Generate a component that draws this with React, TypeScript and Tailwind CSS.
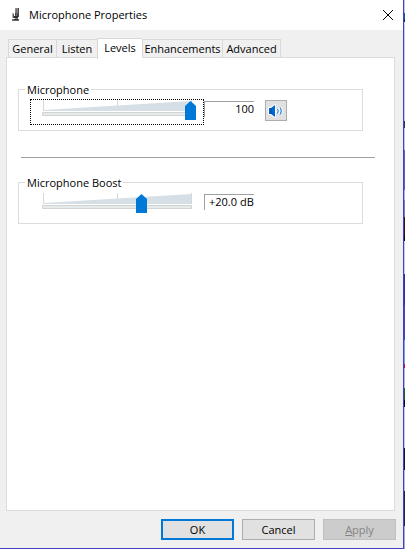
import { useState } from "react";

const tabs = [
    { name: "General", width: "w-12" },
    { name: "Listen", width: "w-[41px]" },
    { name: "Levels", width: "w-[45px]" },
    { name: "Enhancements", width: "w-20" },
    { name: "Advanced", width: "w-[59px]" },
];

const MicIcon = () => {
    return (
        <svg className="h-4 w-4" viewBox="0 0 16 16" shapeRendering="crispEdges">
            <path d="M7 1h4v9H7z" fill="#4a4a4a" />
            <path d="M7 1h3v5H7z" fill="#8b8b8b" />
            <path d="M8 2h1v7H8z" fill="#6a6a6a" />
            <path d="M4 6h2v5H4z" fill="#b5b5b5" />
            <path d="M5 7h1v4H5z" fill="#555" />
            <path d="M6 9h4v2H6z" fill="#2f2f2f" />
            <path d="M7 11h3v1H7z" fill="#777" />
            <path d="M4 12h7v2H4z" fill="#6c6c6c" />
            <path d="M6 12h4v1H6z" fill="#333" />
        </svg>
    );
};

const SpeakerIcon = () => {
    return (
        <svg className="h-4 w-4" viewBox="0 0 16 16">
            <path d="M1 5h2L7 2v12l-4-3H1z" fill="#0067d0" stroke="#fff" strokeWidth="2" strokeLinejoin="round" paintOrder="stroke" />
            <path d="M3 5v6" stroke="#0a4a9c" />
            <path d="M9.500 6q1.500 2 0 4.500M12 4.500q2.500 3.500 0 7" fill="none" stroke="#fff" strokeWidth="3" />
            <path d="M9.500 6q1.500 2 0 4.500M12 4.500q2.500 3.500 0 7" fill="none" stroke="#1f7fdc" strokeWidth="1.200" />
        </svg>
    );
};

const VolumeSlider = ({ label, max, value, onChange }: { label: string; max: number; value: number; onChange: (v: number) => void }) => {
    return (
        <div className="relative h-6 w-[158px]">
            <svg className="absolute left-1 top-0 h-6 w-[150px]" viewBox="0 0 150 24">
                <path d="M1 0h1v11H1zM75 0h1v11h-1zM149 0h1v11h-1z" fill="#d5d9dc" />
                <path d="M2 10 149 1v10H2z" fill="#d6dfe6" />
                <path d="M.5 12.500h149v3H.5z" fill="#e7eaea" stroke="#d2d4d4" />
            </svg>
            <input
                type="range"
                aria-label={label}
                min={0}
                max={max}
                value={value}
                onChange={(e) => onChange(Number(e.target.value))}
                className="absolute inset-0 m-0 h-6 w-full appearance-none bg-transparent outline-none [&::-webkit-slider-runnable-track]:h-[22px] [&::-webkit-slider-thumb]:h-[19px] [&::-webkit-slider-thumb]:w-[11px] [&::-webkit-slider-thumb]:appearance-none [&::-webkit-slider-thumb]:bg-[#0078d7] [&::-webkit-slider-thumb]:[clip-path:polygon(50%_0,100%_5px,100%_100%,0_100%,0_5px)]"
            />
        </div>
    );
};

export default function App() {
    const [tab, setTab] = useState("Levels");
    const [level, setLevel] = useState(100);
    const [boost, setBoost] = useState(20);

    return (
        <div className="flex min-h-screen bg-white font-['Open_Sans','Noto_Sans',sans-serif] text-[11px] text-black">
            <div className="flex flex-1 flex-col border-b border-r border-[#4340c8] bg-[#f0f0f0]">
                <header className="flex h-[30px] items-center bg-white pl-2 pr-[10px]">
                    <MicIcon />
                    <h1 className="ml-[5px] flex-1">Microphone Properties</h1>
                    <button aria-label="Close" className="h-[10px] w-[10px]">
                        <svg className="h-[10px] w-[10px]" viewBox="0 0 10 10">
                            <path d="M0 0 10 10M10 0 0 10" stroke="#000" />
                        </svg>
                    </button>
                </header>

                <div role="tablist" className="flex h-7 items-end pl-2">
                    {tabs.map((t) => (
                        <button
                            key={t.name}
                            role="tab"
                            aria-selected={tab === t.name}
                            onClick={() => setTab(t.name)}
                            className={`${t.width} flex justify-center whitespace-nowrap border-l border-t border-[#d9d9d9] pt-px leading-4 last:border-r ${
                                tab === t.name ? "relative z-10 -mb-px h-[21px] bg-white" : "h-[19px] bg-[#f0f0f0]"
                            }`}
                        >
                            {t.name}
                        </button>
                    ))}
                </div>

                <main role="tabpanel" className="mx-[6px] mr-2 -mt-px flex-1 border border-[#dcdcdc] bg-white pl-[11px] pr-[31px] pt-6">
                    <fieldset className="h-[49px] min-w-0 border border-[#dcdcdc]">
                        <legend className="ml-[6px] px-[2px] leading-[15px]">Microphone</legend>
                        <div className="flex items-start pl-[11px] pt-[2px]">
                            <div className="flex h-[26px] w-[174px] items-start border border-dotted border-black pl-[7px]">
                                <VolumeSlider label="Microphone" max={100} value={level} onChange={setLevel} />
                            </div>
                            <input aria-label="Microphone level" readOnly value={level} className="mt-[2px] h-4 w-[50px] border-l border-t border-[#a0a0a0] text-right outline-none" />
                            <button aria-label="Mute" className="ml-[11px] mt-px flex h-[21px] w-[22px] items-center justify-center border border-[#adadad] bg-[#e1e1e1]">
                                <SpeakerIcon />
                            </button>
                        </div>
                    </fieldset>

                    <hr className="-mr-3 ml-[3px] mt-[26px] border-t border-[#a0a0a0]" />

                    <fieldset className="mt-[17px] h-[49px] min-w-0 border border-[#dcdcdc]">
                        <legend className="ml-[6px] px-[2px] leading-[15px]">Microphone Boost</legend>
                        <div className="flex items-start pl-[11px] pt-[2px]">
                            <div className="flex h-[26px] w-[174px] items-start border border-transparent pl-[7px]">
                                <VolumeSlider label="Microphone Boost" max={30} value={boost} onChange={setBoost} />
                            </div>
                            <input aria-label="Boost level" readOnly value={`+${boost.toFixed(1)} dB`} className="mt-[2px] h-4 w-[50px] border-l border-t border-[#a0a0a0] pl-1 outline-none" />
                        </div>
                    </fieldset>
                </main>

                <footer className="flex justify-end gap-2 pb-2 pr-[7px] pt-2">
                    <button className="h-[21px] w-[73px] border-2 border-[#0078d7] bg-[#e1e1e1] leading-4">OK</button>
                    <button className="h-[21px] w-[73px] border border-[#adadad] bg-[#e1e1e1] leading-4">Cancel</button>
                    <button disabled className="h-[21px] w-[73px] border border-[#bfbfbf] bg-[#cccccc] leading-4 text-[#838383]">
                        <u>A</u>pply
                    </button>
                </footer>
            </div>

            {/* sliver of the desktop behind the dialog */}
            <div className="w-px bg-[linear-gradient(#c6c6e0_13px,#0b5aa5_13px_19px,#10204a_19px_22px,#cacae4_22px_121px,#34344a_121px_128px,#c4c4e0_128px_150px,#5563bd_150px_190px,#b4b0e2_190px_200px,#6d80b8_200px_217px,#3a0c14_217px_236px,#080814_236px_241px,#cacae4_241px_274px,#2b3494_274px_305px,#4048b8_305px_340px,#7f9fe0_340px_364px,#c01838_364px_368px,#b8b4e4_368px_388px,#146414_388px_400px,#05050f_400px_407px,#cacae4_407px_448px,#15152a_448px_470px,#b8b8da_470px_491px,#24263a_491px_526px,#a8a8d4_526px)]" />
        </div>
    );
}
